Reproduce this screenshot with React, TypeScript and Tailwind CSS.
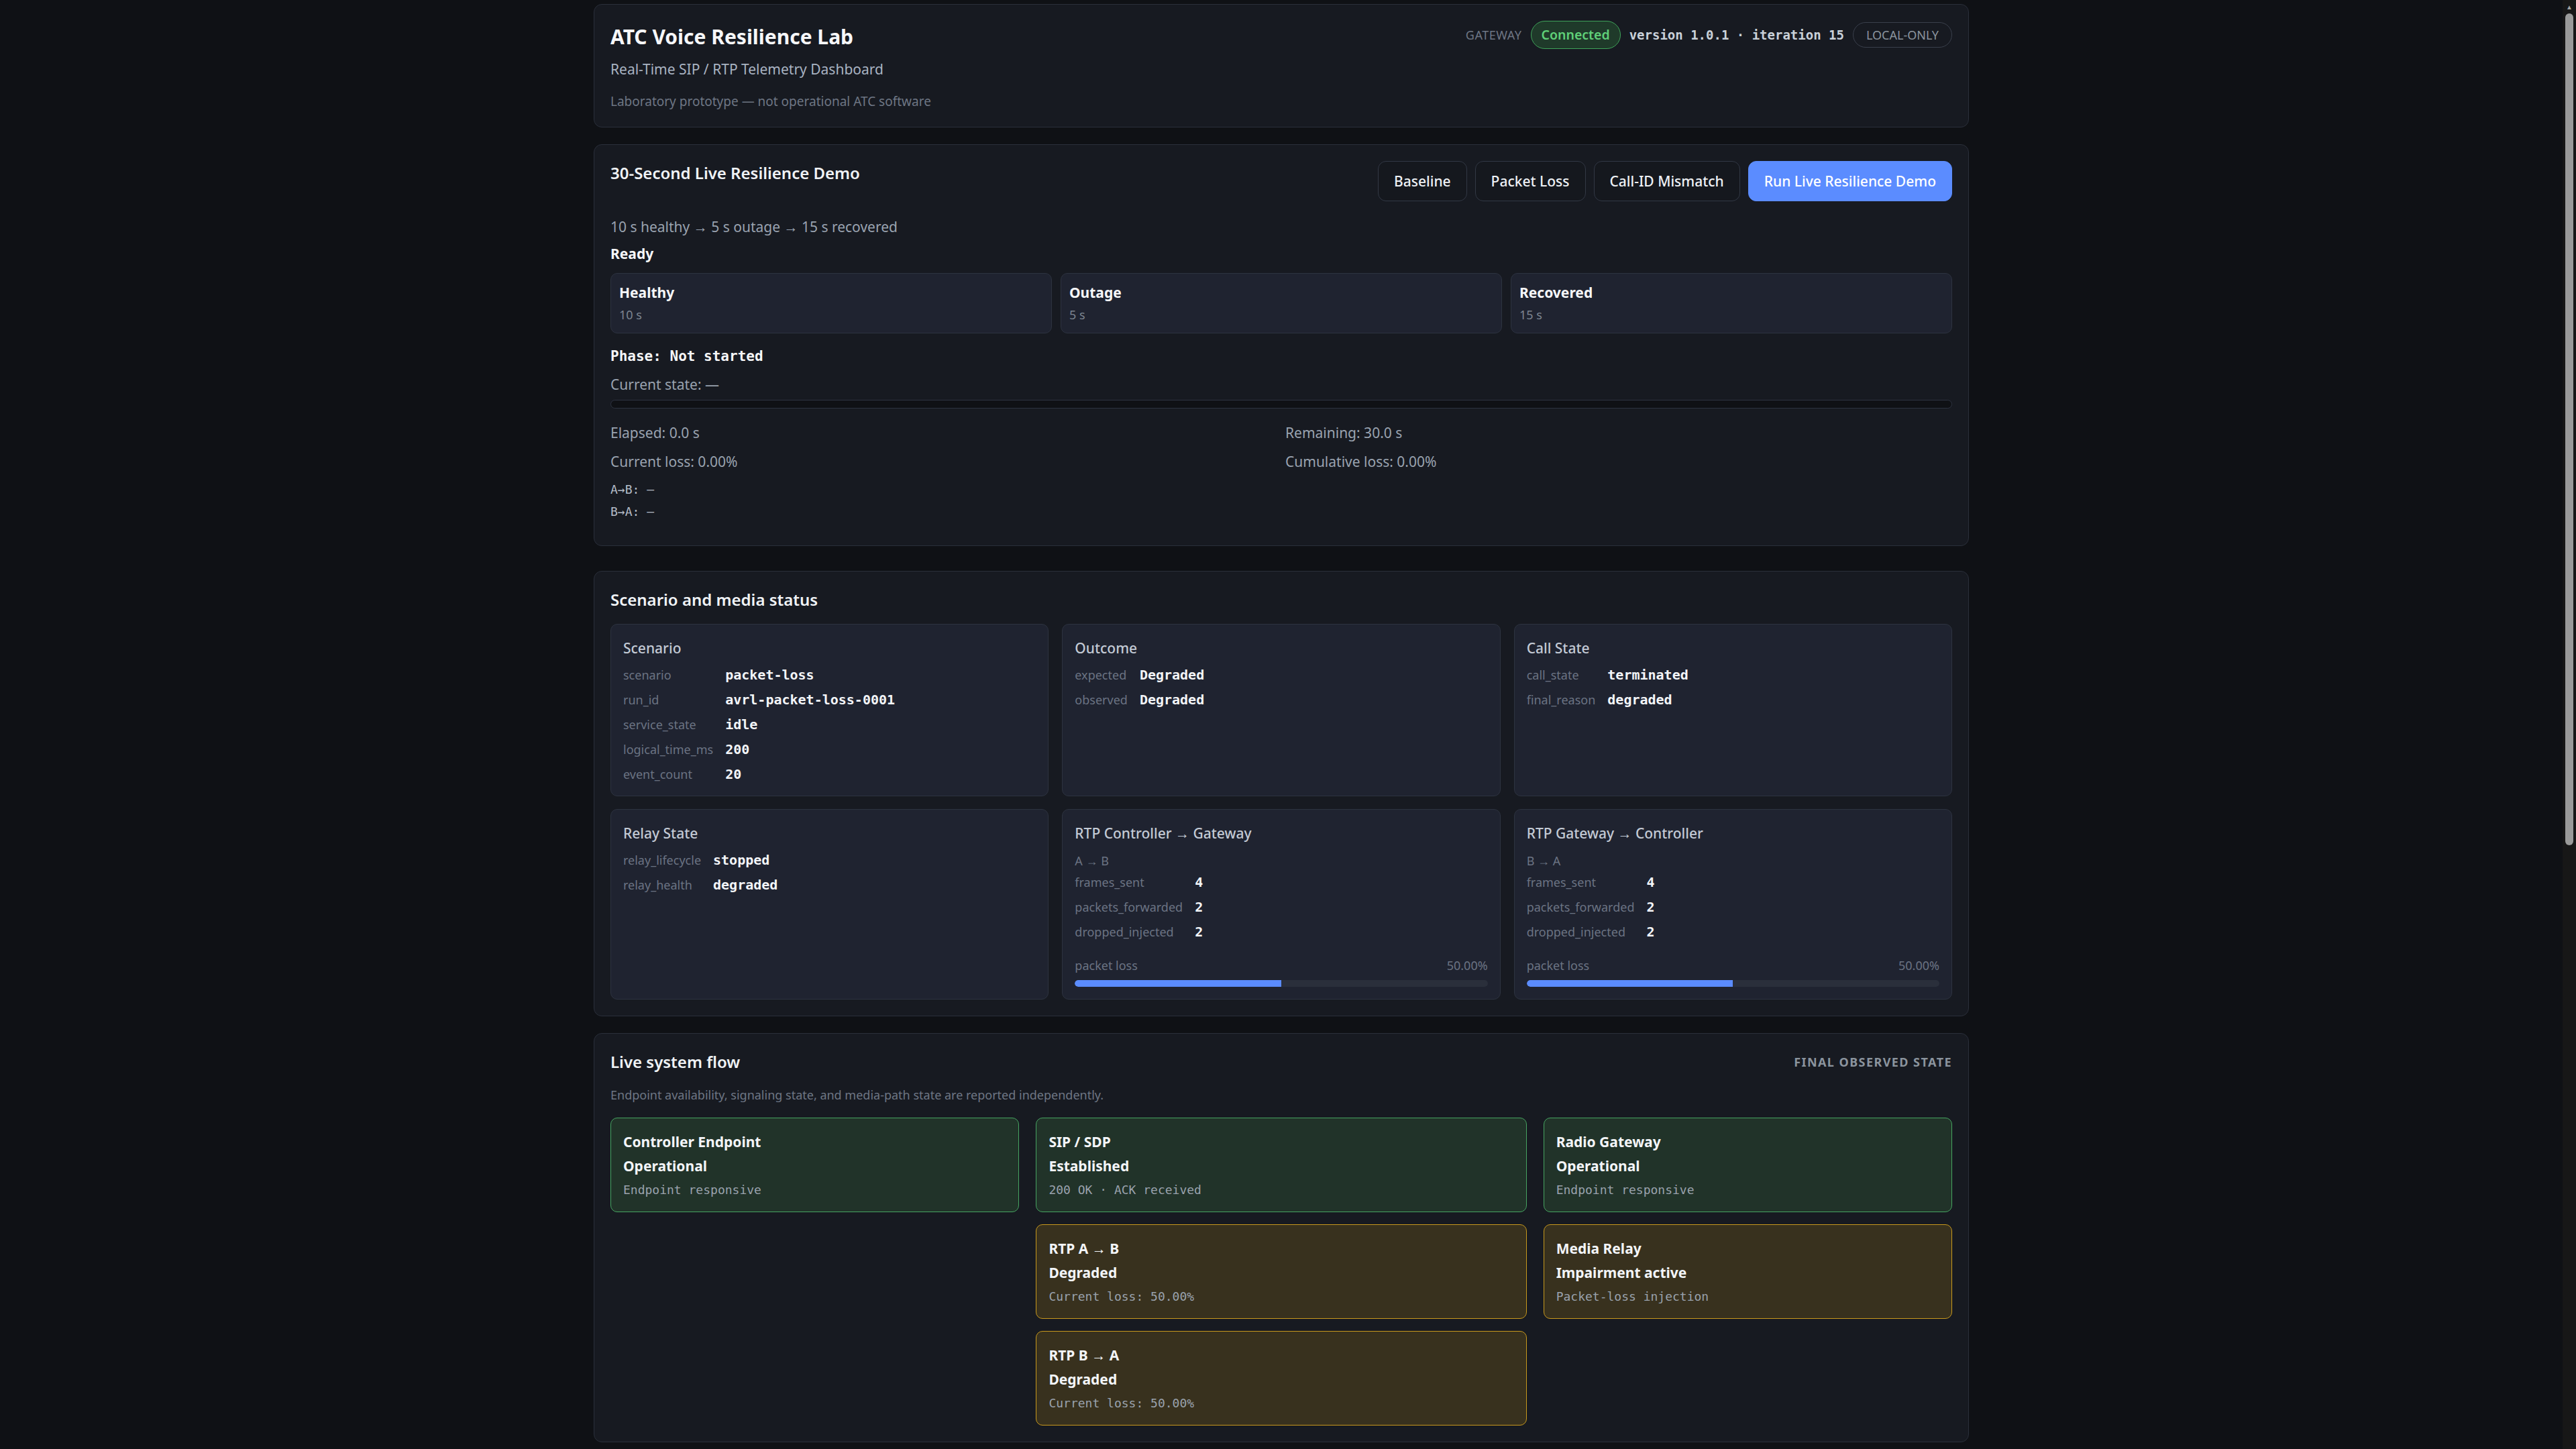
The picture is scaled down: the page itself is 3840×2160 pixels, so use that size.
import type { ReactNode } from "react";

const mono = "font-['DejaVu_Sans_Mono','Liberation_Mono',monospace]";

const phases = [
  { name: "Healthy", duration: "10 s" },
  { name: "Outage", duration: "5 s" },
  { name: "Recovered", duration: "15 s" },
];

const scenarioRows = [
  ["scenario", "packet-loss"],
  ["run_id", "avrl-packet-loss-0001"],
  ["service_state", "idle"],
  ["logical_time_ms", "200"],
  ["event_count", "20"],
];

const outcomeRows = [
  ["expected", "Degraded"],
  ["observed", "Degraded"],
];

const callRows = [
  ["call_state", "terminated"],
  ["final_reason", "degraded"],
];

const relayRows = [
  ["relay_lifecycle", "stopped"],
  ["relay_health", "degraded"],
];

const rtpRows = [
  ["frames_sent", "4"],
  ["packets_forwarded", "2"],
  ["dropped_injected", "2"],
];

type Tone = "ok" | "warn";

type FlowNode = { title: string; status: string; detail: string; tone: Tone };

const flowColumns: FlowNode[][] = [
  [
    {
      title: "Controller Endpoint",
      status: "Operational",
      detail: "Endpoint responsive",
      tone: "ok",
    },
  ],
  [
    {
      title: "SIP / SDP",
      status: "Established",
      detail: "200 OK · ACK received",
      tone: "ok",
    },
    {
      title: "RTP A → B",
      status: "Degraded",
      detail: "Current loss: 50.00%",
      tone: "warn",
    },
    {
      title: "RTP B → A",
      status: "Degraded",
      detail: "Current loss: 50.00%",
      tone: "warn",
    },
  ],
  [
    {
      title: "Radio Gateway",
      status: "Operational",
      detail: "Endpoint responsive",
      tone: "ok",
    },
    {
      title: "Media Relay",
      status: "Impairment active",
      detail: "Packet-loss injection",
      tone: "warn",
    },
  ],
];

function Panel({ children, className = "" }: { children: ReactNode; className?: string }) {
  return (
    <section
      className={`rounded-[12px] border border-[#2a2f3a] bg-[#171a21] p-[24px] ${className}`}
    >
      {children}
    </section>
  );
}

function KeyValues({ rows }: { rows: string[][] }) {
  return (
    <dl className="grid grid-cols-[auto_1fr] items-baseline gap-x-[18px] gap-y-[10px]">
      {rows.map(([k, v]) => (
        <div key={k} className="contents">
          <dt className="text-[18px] leading-[27px] text-[#6b7383]">{k}</dt>
          <dd className={`${mono} text-[20px] leading-[27px] font-bold text-[#f3f5f8]`}>{v}</dd>
        </div>
      ))}
    </dl>
  );
}

function StatusCard({ title, children }: { title: string; children: ReactNode }) {
  return (
    <div className="rounded-[10px] border border-[#2d3340] bg-[#1f2330] px-[18px] pt-[20px] pb-[18px]">
      <h3 className="text-[21px] leading-[30px] font-medium text-[#c3cad5]">{title}</h3>
      {children}
    </div>
  );
}

function RtpCard({ title, direction }: { title: string; direction: string }) {
  const loss = 50;
  return (
    <StatusCard title={title}>
      <p className="mt-[13px] text-[18px] leading-[27px] text-[#6b7383]">{direction}</p>
      <div className="mt-[5px]">
        <KeyValues rows={rtpRows} />
      </div>
      <div className="mt-[23px] flex justify-between text-[18px] leading-[27px] text-[#6b7383]">
        <span>packet loss</span>
        <span>{loss.toFixed(2)}%</span>
      </div>
      <div className="mt-[8px] h-[10px] overflow-hidden rounded-full bg-[#2a2f3b]">
        <div className="h-full rounded-l-full bg-[#5b8cff]" style={{ width: `${loss}%` }} />
      </div>
    </StatusCard>
  );
}

function FlowCard({ node }: { node: FlowNode }) {
  const tone =
    node.tone === "ok"
      ? "border-[#46a461] bg-[#213329]"
      : "border-[#c8991d] bg-[#38311e]";
  return (
    <div className={`rounded-[10px] border px-[18px] pt-[20px] pb-[19px] ${tone}`}>
      <h3 className="text-[21px] leading-[30px] font-bold text-[#f3f5f8]">{node.title}</h3>
      <p className="mt-[6px] text-[21px] leading-[30px] font-bold text-[#f3f5f8]">{node.status}</p>
      <p className={`${mono} mt-[7px] text-[18px] leading-[27px] text-[#9aa2ad]`}>{node.detail}</p>
    </div>
  );
}

export default function App() {
  return (
    <div className="flex min-h-screen bg-[#0f1115] font-['Noto_Sans','Open_Sans',sans-serif] text-[#e6e9ee]">
      <main className="flex-1 pt-[6px] pb-[24px]">
        <div className="mx-auto flex w-[2050px] flex-col">
          {/* Header */}
          <Panel className="flex items-start justify-between">
            <div>
              <h1 className="mt-[3px] text-[30px] leading-[42px] font-bold text-[#f6f7f9]">
                ATC Voice Resilience Lab
              </h1>
              <p className="mt-[12px] text-[21px] leading-[30px] text-[#a9b3c2]">
                Real-Time SIP / RTP Telemetry Dashboard
              </p>
              <p className="mt-[19px] text-[19px] leading-[28px] text-[#6e7684]">
                Laboratory prototype — not operational ATC software
              </p>
            </div>
            <div className="flex items-center gap-[13px]">
              <span className="text-[18px] uppercase tracking-[0.03em] text-[#6e7684]">Gateway</span>
              <span className="rounded-full border border-[#3fa35a] bg-[#1f3a2a] px-[15px] py-[5px] text-[19.5px] leading-[30px] font-semibold text-[#5fcf78]">
                Connected
              </span>
              <span className={`${mono} text-[19px] font-bold text-[#c9d1d9]`}>
                version 1.0.1 · iteration 15
              </span>
              <span className="rounded-full border border-[#3a404c] px-[19px] py-[4px] text-[18px] leading-[28px] uppercase text-[#8b949e]">
                Local-only
              </span>
            </div>
          </Panel>

          {/* Live resilience demo */}
          <Panel className="mt-[25px] pb-[37px]">
            <div className="flex items-start justify-between">
              <h2 className="text-[24px] leading-[36px] font-semibold text-[#f0f3f6]">
                30-Second Live Resilience Demo
              </h2>
              <div className="flex gap-[12px]">
                {["Baseline", "Packet Loss", "Call-ID Mismatch"].map((label) => (
                  <button
                    key={label}
                    className="rounded-[12px] border border-[#323845] bg-[#15181e] px-[23px] py-[14px] text-[21px] leading-[30px] font-medium text-[#eef1f5]"
                  >
                    {label}
                  </button>
                ))}
                <button className="rounded-[12px] border border-[#5b8cff] bg-[#5b8cff] px-[23px] py-[14px] text-[21px] leading-[30px] font-medium text-white">
                  Run Live Resilience Demo
                </button>
              </div>
            </div>
            <p className="mt-[23px] text-[21px] leading-[30px] text-[#9aa3b0]">
              10 s healthy → 5 s outage → 15 s recovered
            </p>
            <p className="mt-[10px] text-[21px] leading-[30px] font-bold text-[#f6f7f9]">Ready</p>
            <div className="mt-[14px] grid grid-cols-3 gap-[13px]">
              {phases.map((p) => (
                <div
                  key={p.name}
                  className="rounded-[10px] border border-[#2d3340] bg-[#1f2330] px-[12px] py-[13px]"
                >
                  <p className="text-[21px] leading-[30px] font-bold text-[#f6f7f9]">{p.name}</p>
                  <p className="mt-[5px] text-[18px] leading-[27px] text-[#7d8590]">{p.duration}</p>
                </div>
              ))}
            </div>
            <p className={`${mono} mt-[19px] text-[21px] leading-[30px] font-bold text-[#f6f7f9]`}>
              Phase: Not started
            </p>
            <p className="mt-[12px] text-[21px] leading-[30px] text-[#9aa3b0]">Current state: —</p>
            <div className="mt-[8px] h-[13px] rounded-full border border-[#2d3340] bg-[#0f1115]" />
            <div className="mt-[21px] grid grid-cols-2 gap-x-[12px] gap-y-[13px] text-[21px] leading-[30px] text-[#9aa3b0]">
              <p>Elapsed: 0.0 s</p>
              <p>Remaining: 30.0 s</p>
              <p>Current loss: 0.00%</p>
              <p>Cumulative loss: 0.00%</p>
            </div>
            <div className={`${mono} mt-[13px] flex flex-col gap-[6px] text-[18px] leading-[27px] text-[#b4bcc8]`}>
              <p>A→B: —</p>
              <p>B→A: —</p>
            </div>
          </Panel>

          {/* Scenario and media status */}
          <Panel className="mt-[37px]">
            <h2 className="text-[24px] leading-[36px] font-semibold text-[#f0f3f6]">
              Scenario and media status
            </h2>
            <div className="mt-[18px] grid grid-cols-3 gap-x-[20px] gap-y-[19px]">
              <StatusCard title="Scenario">
                <div className="mt-[12px]">
                  <KeyValues rows={scenarioRows} />
                </div>
              </StatusCard>
              <StatusCard title="Outcome">
                <div className="mt-[12px]">
                  <KeyValues rows={outcomeRows} />
                </div>
              </StatusCard>
              <StatusCard title="Call State">
                <div className="mt-[12px]">
                  <KeyValues rows={callRows} />
                </div>
              </StatusCard>
              <StatusCard title="Relay State">
                <div className="mt-[12px]">
                  <KeyValues rows={relayRows} />
                </div>
              </StatusCard>
              <RtpCard title="RTP Controller → Gateway" direction="A → B" />
              <RtpCard title="RTP Gateway → Controller" direction="B → A" />
            </div>
          </Panel>

          {/* Live system flow */}
          <Panel className="mt-[25px]">
            <div className="flex items-center justify-between">
              <h2 className="text-[24px] leading-[36px] font-semibold text-[#f0f3f6]">Live system flow</h2>
              <span className="text-[18px] leading-[27px] font-bold uppercase tracking-[0.08em] text-[#8b949e]">
                Final observed state
              </span>
            </div>
            <p className="mt-[18px] text-[18px] leading-[27px] text-[#6e7684]">
              Endpoint availability, signaling state, and media-path state are reported independently.
            </p>
            <div className="mt-[20px] grid grid-cols-[1fr_1.2fr_1fr] items-start gap-x-[25px]">
              {flowColumns.map((col, i) => (
                <div key={i} className="flex flex-col gap-[18px]">
                  {col.map((node) => (
                    <FlowCard key={node.title} node={node} />
                  ))}
                </div>
              ))}
            </div>
          </Panel>
        </div>
      </main>

      {/* page scrollbar */}
      <aside className="flex w-[20px] flex-col bg-[#171717]">
        <div className="flex h-[20px] items-center justify-center text-[10px] text-[#a3a3a3]">▲</div>
        <div className="mx-[4px] h-[1240px] rounded-full bg-[#9a9a9a]" />
      </aside>
    </div>
  );
}
